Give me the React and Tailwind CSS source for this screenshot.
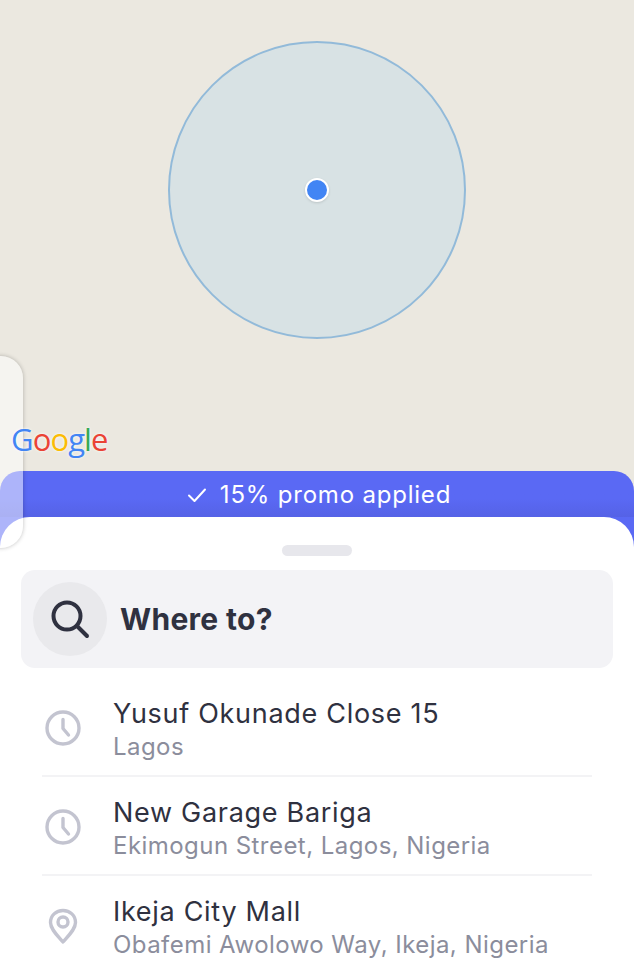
const font = "font-['Inter','Liberation_Sans',sans-serif]"

const places = [
  { id: 1, icon: 'clock', title: 'Yusuf Okunade Close 15', sub: 'Lagos' },
  { id: 2, icon: 'clock', title: 'New Garage Bariga', sub: 'Ekimogun Street, Lagos, Nigeria' },
  { id: 3, icon: 'pin', title: 'Ikeja City Mall', sub: 'Obafemi Awolowo Way, Ikeja, Nigeria' },
]

function ClockIcon() {
  return (
    <svg width="36" height="36" viewBox="0 0 36 36" fill="none" stroke="#c3c4d0" strokeWidth="3.4" strokeLinecap="round" strokeLinejoin="round">
      <circle cx="18" cy="18" r="16" />
      <path d="M18 9.5V18.5L23.5 25" />
    </svg>
  )
}

function PinIcon() {
  return (
    <svg width="36" height="36" viewBox="0 0 36 36" fill="none" stroke="#c3c4d0" strokeWidth="3.4" strokeLinejoin="round">
      <path d="M18 34C12 27 5.5 21 5.5 14.5C5.5 7.5 11 2.5 18 2.5C25 2.5 30.5 7.5 30.5 14.5C30.5 21 24 27 18 34Z" />
      <circle cx="18" cy="14" r="5" />
    </svg>
  )
}

function Row({ place, last }) {
  return (
    <div className="flex h-[99px] items-stretch">
      <div className="flex w-[113px] shrink-0 items-center justify-end pr-[32px]">
        {place.icon === 'clock' ? <ClockIcon /> : <PinIcon />}
      </div>
      <div className={`mr-[42px] -ml-[71px] flex-1 pl-[71px] pt-[19px] ${last ? '' : 'border-b-2 border-[#f3f3f5]'}`}>
        <div className="text-[27px] leading-[34px] tracking-[0.7px] text-[#2f3140]">{place.title}</div>
        <div className="mt-[1px] text-[24px] leading-[30px] tracking-[0.45px] text-[#8b8d9c]">{place.sub}</div>
      </div>
    </div>
  )
}

export default function App() {
  return (
    <div className={`relative h-[971px] w-[634px] overflow-hidden bg-[#ebe8e0] ${font}`}>
      <div className="flex h-[471px] justify-center pt-[41px]">
        <div className="flex h-[298px] w-[298px] items-center justify-center rounded-full border-2 border-[#92bad9] bg-[#d8e2e4]">
          <div className="h-[24px] w-[24px] rounded-full border-[2px] border-white bg-[#4285f4] shadow-sm" />
        </div>
      </div>

      <div className="relative flex h-[46px] items-center justify-center gap-[13px] rounded-t-[20px] bg-linear-to-b from-[#5a69f4] from-60% to-[#5562e6] pt-[2px] pl-[4px] text-[24px] tracking-[0.8px] text-white before:absolute before:left-0 before:right-0 before:top-[46px] before:h-[30px] before:bg-[#5a69f4]">
        <svg width="20" height="16" viewBox="0 0 20 16" fill="none" stroke="white" strokeWidth="2" strokeLinecap="round" strokeLinejoin="round">
          <path d="M2 8.5L7.5 14L18 2.5" />
        </svg>
        <span>15% promo applied</span>
      </div>

      <div className="relative h-[454px] rounded-t-[30px] bg-white">
        <div className="flex justify-center pt-[28px]">
          <div className="h-[11px] w-[70px] rounded-full bg-[#e7e7ec]" />
        </div>
        <div className="mx-[21px] mt-[14px] flex h-[98px] w-[592px] items-center rounded-[14px] bg-[#f3f3f6] pl-[12px]">
          <div className="flex h-[74px] w-[74px] items-center justify-center rounded-full bg-[#e9e9ec]">
            <svg width="40" height="40" viewBox="0 0 40 40" fill="none" stroke="#2f3140" strokeWidth="4" strokeLinecap="round">
              <circle cx="17" cy="17" r="13.5" />
              <path d="M27 27L37 37" />
            </svg>
          </div>
          <span className="ml-[13px] text-[30px] font-bold tracking-[0.3px] text-[#2f3140]">Where to?</span>
        </div>
        <div className="mt-[10px]">
          {places.map((p, i) => <Row key={p.id} place={p} last={i === places.length - 1} />)}
        </div>
      </div>

      {/* floating side panel, half off screen */}
      <div className="absolute top-[356px] -left-[40px] h-[192px] w-[63px] rounded-[22px] bg-white/50 shadow-[0_0_4px_rgba(0,0,0,0.25)]" />

      <div className="absolute top-[418px] left-[11px] font-['Open_Sans',sans-serif] text-[31px] font-medium leading-[42px] tracking-[-0.9px] [text-shadow:0_0_3px_white]">
        <span className="text-[#4285f4]">G</span>
        <span className="text-[#ea4335]">o</span>
        <span className="text-[#fbbc05]">o</span>
        <span className="text-[#4285f4]">g</span>
        <span className="text-[#34a853]">l</span>
        <span className="text-[#ea4335]">e</span>
      </div>
    </div>
  )
}
